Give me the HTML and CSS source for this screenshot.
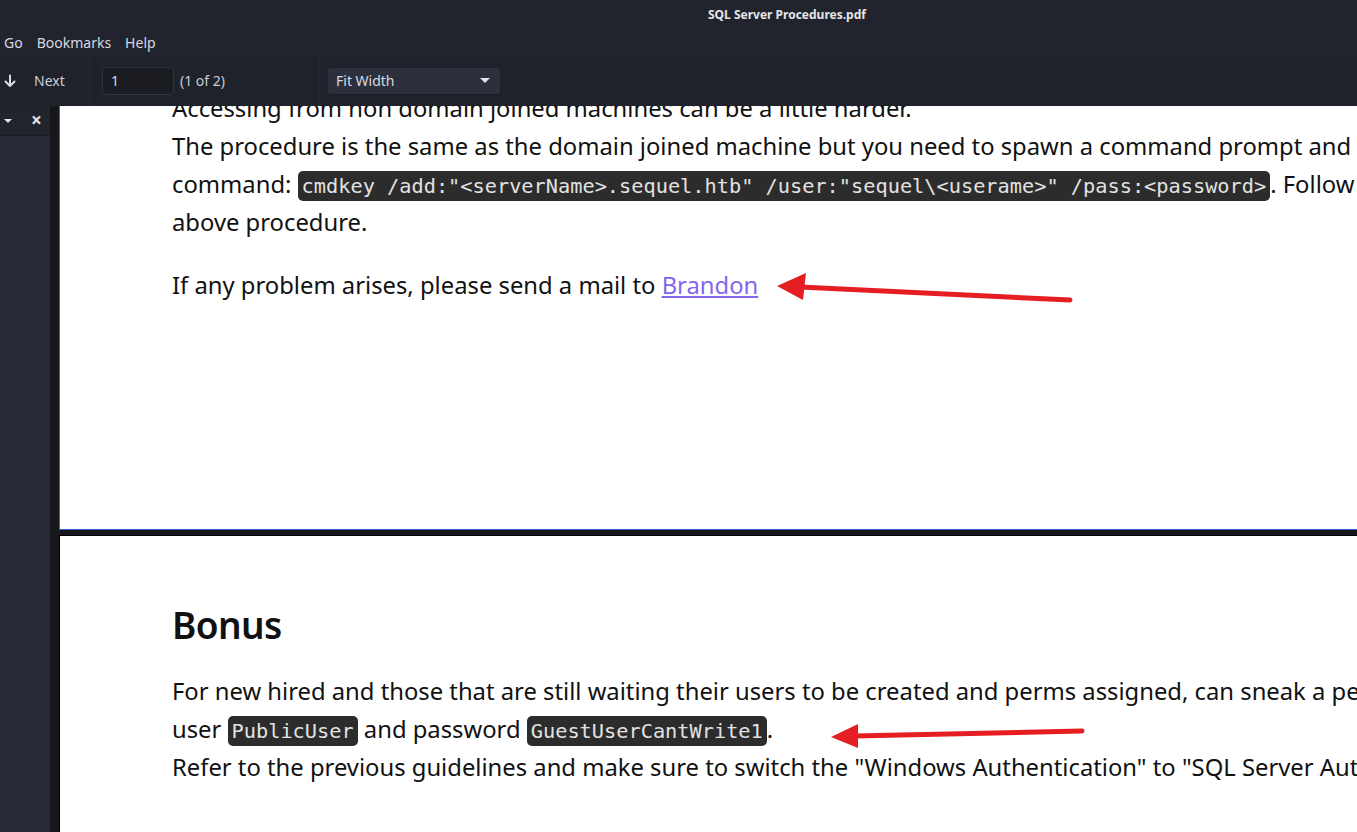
FILE: index.html
```html
<!DOCTYPE html>
<html>
<head>
<meta charset="utf-8">
<link rel="stylesheet" href="styles.css">
</head>
<body>
<div class="app">
  <header class="titlebar"><span class="title">SQL Server Procedures.pdf</span></header>
  <nav class="menubar">
    <span class="menu-item">Go</span>
    <span class="menu-item">Bookmarks</span>
    <span class="menu-item">Help</span>
  </nav>
  <div class="toolbar">
    <div class="tb-group tb-nav">
      <svg class="down-icon" width="12" height="14" viewBox="0 0 12 14"><path d="M6 1.5V12M1.5 7.5L6 12l4.5-4.5" fill="none" stroke="#d8dbe2" stroke-width="2" stroke-linecap="round" stroke-linejoin="round"/></svg>
      <span class="tb-label">Next</span>
    </div>
    <div class="tb-group tb-page">
      <div class="page-input">1</div>
      <span class="tb-count">(1 of 2)</span>
    </div>
    <div class="tb-group tb-zoom">
      <div class="select"><span>Fit Width</span><span class="caret"></span></div>
    </div>
  </div>
  <div class="main">
    <aside class="sidebar">
      <div class="sidebar-head">
        <span class="sb-caret"></span>
        <span class="sb-close">×</span>
      </div>
    </aside>
    <section class="viewer">
      <div class="page page1">
        <p class="para">Accessing from non domain joined machines can be a little harder.<br>The procedure is the same as the domain joined machine but you need to spawn a command prompt and run the following<br>command: <code class="code">cmdkey /add:"&lt;serverName&gt;.sequel.htb" /user:"sequel\&lt;userame&gt;" /pass:&lt;password&gt;</code>. Follow the rest of the<br>above procedure.</p>
        <p class="para">If any problem arises, please send a mail to <a class="link" href="#">Brandon</a></p>
      </div>
      <div class="page page2">
        <h2 class="heading">Bonus</h2>
        <p class="para">For new hired and those that are still waiting their users to be created and perms assigned, can sneak a peek at the Database with<br>user <code class="code">PublicUser</code> and password <code class="code">GuestUserCantWrite1</code>.<br>Refer to the previous guidelines and make sure to switch the "Windows Authentication" to "SQL Server Authentication".</p>
      </div>
    </section>
  </div>
  <svg class="annotations" width="1357" height="832" viewBox="0 0 1357 832">
    <path d="M800 287 L1070 300" stroke="#e41e22" stroke-width="5" stroke-linecap="round"/>
    <path d="M777 286 L806 273 L803 300 Z" fill="#e41e22"/>
    <path d="M854 736 L1082 731" stroke="#e41e22" stroke-width="5" stroke-linecap="round"/>
    <path d="M831 737 L858 724 L858 748 Z" fill="#e41e22"/>
  </svg>
</div>
</body>
</html>
```
FILE: styles.css
```css
* { box-sizing: border-box; }
html, body { margin: 0; padding: 0; }
body {
  width: 1357px;
  height: 832px;
  overflow: hidden;
  background: #23252e;
  font-family: "Noto Sans", "Open Sans", sans-serif;
}
.app {
  position: relative;
  width: 1357px;
  height: 832px;
  display: flex;
  flex-direction: column;
  overflow: hidden;
}
.titlebar {
  height: 28px;
  flex: none;
  background: #22242d;
  display: flex;
  align-items: center;
  padding-left: 708px;
}
.title {
  color: #e3e5ea;
  font-size: 12px;
  font-weight: 700;
}
.menubar {
  height: 27px;
  flex: none;
  background: #22242d;
  display: flex;
  align-items: center;
  gap: 14px;
  padding-left: 4px;
  padding-top: 1px;
}
.menu-item {
  color: #d6d9e0;
  font-size: 14px;
}
.toolbar {
  height: 51px;
  flex: none;
  background: #20222b;
  display: flex;
  align-items: stretch;
}
.tb-group {
  display: flex;
  align-items: center;
}
.tb-nav {
  width: 90px;
  padding-left: 4px;
  gap: 18px;
  border-right: 1px solid #262831;
}
.down-icon { display: block; }
.tb-label {
  color: #c9cdd6;
  font-size: 14px;
}
.tb-page {
  width: 230px;
  padding-left: 12px;
  gap: 6px;
  border-right: 1px solid #262831;
}
.page-input {
  width: 72px;
  height: 28px;
  background: #1a1c22;
  border: 1px solid #30333c;
  border-radius: 4px;
  color: #d6d9e0;
  font-size: 14px;
  padding-left: 8px;
  display: flex;
  align-items: center;
}
.tb-count {
  color: #c9cdd6;
  font-size: 14px;
}
.tb-zoom {
  padding-left: 7px;
}
.select {
  width: 174px;
  height: 28px;
  background: #2d303c;
  border: 1px solid #1c1e25;
  border-radius: 4px;
  color: #d6d9e0;
  font-size: 14px;
  padding: 0 10px 0 8px;
  display: flex;
  align-items: center;
  justify-content: space-between;
}
.caret {
  width: 0;
  height: 0;
  border-left: 5px solid transparent;
  border-right: 5px solid transparent;
  border-top: 5px solid #dfe2e8;
}
.main {
  flex: 1;
  display: flex;
  min-height: 0;
}
.sidebar {
  width: 50px;
  flex: none;
  background: #262936;
}
.sidebar-head {
  height: 30px;
  background: #22242d;
  border-bottom: 1px solid #1a1b21;
  display: flex;
  align-items: center;
  padding-left: 2px;
  gap: 19px;
}
.sb-caret {
  margin-left: 2px;
  width: 0;
  height: 0;
  border-left: 4px solid transparent;
  border-right: 4px solid transparent;
  border-top: 4px solid #e3e5ea;
}
.sb-close {
  color: #e3e5ea;
  font-size: 19px;
  font-weight: 700;
  line-height: 1;
}
.viewer {
  flex: 1;
  min-width: 0;
  background: #16171b;
  padding-left: 9px;
  overflow: hidden;
}
.page {
  width: 1400px;
  background: #ffffff;
  padding-left: 112px;
  color: #111111;
  font-family: "Noto Sans", "Open Sans", sans-serif;
  font-size: 23.8px;
  line-height: 38px;
}
.page1 {
  margin-top: -17px;
  height: 441px;
  border-left: 1px solid #2e68d6;
  border-bottom: 1px solid #2e68d6;
}
.page2 {
  margin-top: 5px;
  height: 400px;
  border-left: 1px solid #000000;
  border-top: 1px solid #000000;
  padding-top: 65px;
}
.para {
  margin: 0 0 25px 0;
  white-space: nowrap;
}
.heading {
  margin: 0 0 23px 0;
  font-size: 37px;
  line-height: 48px;
  font-weight: 600;
  letter-spacing: -0.6px;
}
.code {
  font-family: "DejaVu Sans Mono", monospace;
  font-size: 20.3px;
  line-height: 20px;
  background: #2c2c2c;
  color: #e2e2e2;
  border-radius: 5px;
  padding: 3px 4px;
}
.link {
  color: #8466ee;
  text-decoration: underline;
}
.annotations {
  position: absolute;
  left: 0;
  top: 0;
  pointer-events: none;
}
```
